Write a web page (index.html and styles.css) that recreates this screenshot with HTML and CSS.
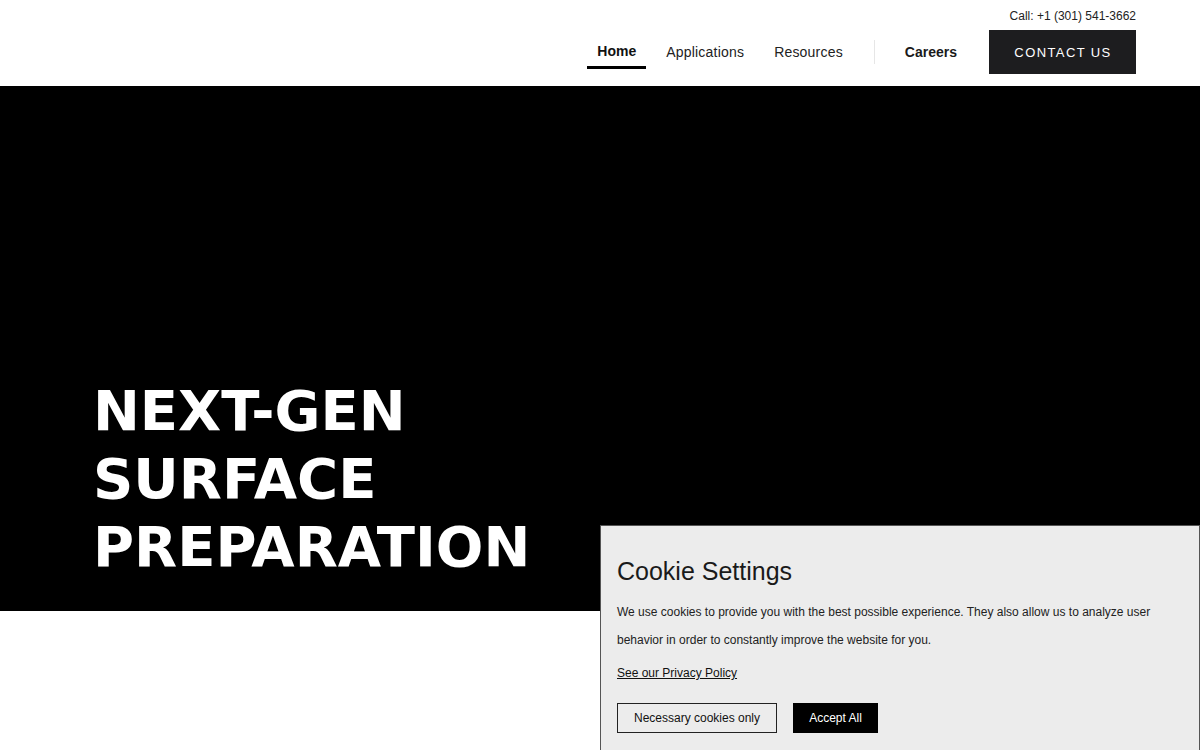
FILE: index.html
```html
<!DOCTYPE html>
<html lang="en">
<head>
<meta charset="utf-8">
<title>Next-Gen Surface Preparation</title>
<link rel="stylesheet" href="styles.css">
</head>
<body>
<header class="site-header">
  <div class="header-inner">
    <div class="topline">Call: +1 (301) 541-3662</div>
    <nav class="main-nav">
      <a class="nav-link active" href="#">Home</a>
      <a class="nav-link" href="#">Applications</a>
      <a class="nav-link" href="#">Resources</a>
      <span class="nav-sep"></span>
      <a class="nav-link strong" href="#">Careers</a>
      <a class="nav-cta" href="#">CONTACT US</a>
    </nav>
  </div>
</header>

<section class="hero">
  <h1 class="hero-title">NEXT-GEN<br>SURFACE<br>PREPARATION</h1>
</section>

<div class="cookie-panel">
  <h2 class="cookie-title">Cookie Settings</h2>
  <p class="cookie-text">We use cookies to provide you with the best possible experience. They also allow us to analyze user behavior in order to constantly improve the website for you.</p>
  <a class="cookie-link" href="#">See our Privacy Policy</a>
  <div class="cookie-actions">
    <button class="btn-outline">Necessary cookies only</button>
    <button class="btn-solid">Accept All</button>
  </div>
</div>
</body>
</html>
```

FILE: styles.css
```css
* { box-sizing: border-box; }

html, body {
  margin: 0;
  padding: 0;
  background: #fff;
  font-family: "Liberation Sans", Arial, sans-serif;
  color: #111;
}

a { color: inherit; text-decoration: none; }

/* header */
.site-header {
  height: 86px;
  background: #fff;
}

.header-inner {
  width: 1072px;
  margin: 0 auto;
  display: flex;
  flex-direction: column;
  align-items: flex-end;
}

.topline {
  font-size: 12px;
  line-height: 14px;
  color: #222;
  padding-top: 9px;
  height: 30px;
}

.main-nav {
  display: flex;
  align-items: center;
  height: 44px;
}

.nav-link {
  position: relative;
  font-size: 14px;
  letter-spacing: 0.2px;
  color: #222;
  padding: 0 10px;
  margin-right: 10px;
  line-height: 44px;
}

.nav-link.active {
  font-weight: bold;
  letter-spacing: 0;
  color: #111;
  line-height: 42px;
  padding-bottom: 2px;
}

.nav-link.active::after {
  content: "";
  position: absolute;
  left: 0;
  right: 0;
  bottom: 5px;
  height: 3px;
  background: #000;
}

.nav-link.strong {
  font-weight: bold;
  letter-spacing: 0;
  color: #1a1a1a;
  margin-right: 22px;
}

.nav-sep {
  width: 1px;
  height: 24px;
  background: #e6e6e6;
  margin: 0 20px 0 11px;
}

.nav-cta {
  display: flex;
  align-items: center;
  justify-content: center;
  width: 147px;
  height: 44px;
  background: #1d1d1f;
  color: #fff;
  font-size: 13px;
  letter-spacing: 1.4px;
  padding-left: 1px;
}

/* hero */
.hero {
  height: 525px;
  background: #000;
  display: flex;
  align-items: flex-end;
  padding: 0 0 30px 93px;
}

.hero-title {
  margin: 0;
  color: #fff;
  font-family: "DejaVu Sans", Verdana, sans-serif;
  font-weight: bold;
  font-size: 56px;
  line-height: 68px;
  letter-spacing: 0;
}

/* cookie banner */
.cookie-panel {
  position: fixed;
  left: 600px;
  top: 525px;
  width: 600px;
  height: 226px;
  background: #ececec;
  border: 1px solid #555;
  padding: 28px 16px 0 16px;
}

.cookie-title {
  margin: 0;
  font-weight: normal;
  font-size: 25px;
  line-height: 34px;
  color: #1a1a1a;
}

.cookie-text {
  margin: 10px 0 0;
  font-size: 12px;
  line-height: 28px;
  color: #222;
}

.cookie-link {
  display: inline-block;
  margin-top: 10px;
  font-size: 12px;
  line-height: 18px;
  color: #111;
  text-decoration: underline;
}

.cookie-actions {
  display: flex;
  gap: 16px;
  margin-top: 21px;
}

.btn-outline,
.btn-solid {
  font-family: "Liberation Sans", Arial, sans-serif;
  font-size: 12px;
  height: 30px;
  padding: 0;
  white-space: nowrap;
  cursor: pointer;
}

.btn-outline {
  width: 160px;
  background: transparent;
  border: 1px solid #222;
  color: #111;
}

.btn-solid {
  width: 85px;
  background: #000;
  border: 1px solid #000;
  color: #fff;
}
```
